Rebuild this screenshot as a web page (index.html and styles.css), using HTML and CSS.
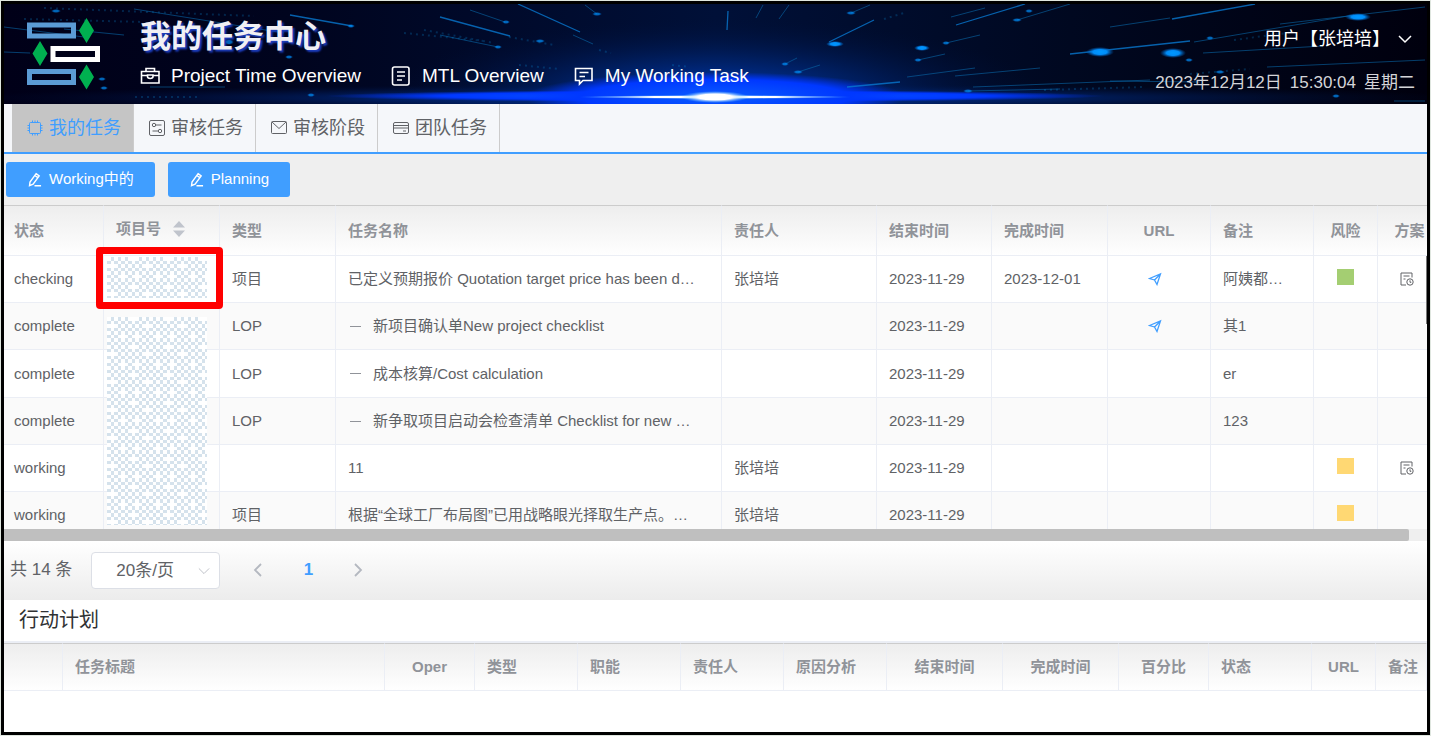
FILE: index.html
```html
<!DOCTYPE html>
<html lang="zh-CN">
<head>
<meta charset="utf-8">
<title>我的任务中心</title>
<link rel="stylesheet" href="styles.css">
</head>
<body>
<svg class="defs" aria-hidden="true">
  <symbol id="i-case" viewBox="0 0 20 20"><path d="M1.5 5.500h17.500v11.500h-17.500zM6 5.500v-3h8.500v3M1.500 9.500h6M13 9.500h6M7.500 9v1.500c0 2.600 5.500 2.600 5.500 0v-1.500z"/></symbol>
  <symbol id="i-doc" viewBox="0 0 20 20"><rect x="1.500" y="1" width="16.500" height="18" rx="2"/><path d="M6 6h8M6 10h8M6 14h5"/></symbol>
  <symbol id="i-chat" viewBox="0 0 20 20"><path d="M1.500 2.500h16.500v12h-9l-3.500 3.500v-3.500h-4zM5.500 6.500h9M5.500 10.500h5.500"/></symbol>
  <symbol id="i-chip" viewBox="0 0 16 16"><rect x="2.500" y="2.500" width="11" height="11" rx="1"/><path d="M5.500 2.500v-2M8 2.500v-2M10.500 2.500v-2M5.500 15.500v-2M8 15.500v-2M10.500 15.500v-2M.500 5.500h2M.500 8h2M.500 10.500h2M13.500 5.500h2M13.500 8h2M13.500 10.500h2"/></symbol>
  <symbol id="i-setup" viewBox="0 0 16 16"><rect x=".500" y=".500" width="15" height="15" rx="1.500"/><circle cx="5" cy="5" r="1.700"/><path d="M7 5h5.500M3.500 11h5.500"/><circle cx="11" cy="11" r="1.700"/></symbol>
  <symbol id="i-mail" viewBox="0 0 16 16"><rect x=".500" y="1.500" width="15" height="12" rx="1"/><path d="M1 2l7 6.500 7-6.500"/></symbol>
  <symbol id="i-card" viewBox="0 0 16 16"><rect x=".500" y="2.500" width="15" height="11" rx="1.500"/><path d="M.500 5.500h15M.500 8h15M10 11h3"/></symbol>
  <symbol id="i-edit" viewBox="0 0 16 16"><path d="M9.700 1.800l3.300 2.300-6.500 9-3.800 1.400.5-3.700zM8.300 3.700l3.300 2.300M8 14.600h7"/></symbol>
  <symbol id="i-send" viewBox="0 0 14 14"><path d="M1.500 6.500l11-4.500-3.500 10.500-2.500-4.500zM6.500 8l6-6"/></symbol>
  <symbol id="i-plan" viewBox="0 0 14 14"><path d="M12 5.500v-4.500h-11v12h5M3.500 4h6M3.500 7h2"/><circle cx="10" cy="10" r="3.200"/><path d="M10 8.300v2h1.300"/></symbol>
  <symbol id="i-down" viewBox="0 0 14 14"><path d="M1 4l6 6 6-6"/></symbol>
</svg>

<header class="banner">
  <svg class="sky" viewBox="0 0 1423 100" preserveAspectRatio="none" aria-hidden="true">
    <defs>
      <linearGradient id="base"><stop offset="0" stop-color="#000018"/><stop offset=".2" stop-color="#00041e"/><stop offset=".5" stop-color="#001038"/><stop offset=".75" stop-color="#000820"/><stop offset="1" stop-color="#00000e"/></linearGradient>
      <radialGradient id="halo"><stop offset="0" stop-color="#0040c8"/><stop offset=".5" stop-color="#002a80" stop-opacity=".55"/><stop offset="1" stop-color="#001038" stop-opacity="0"/></radialGradient>
      <radialGradient id="flare"><stop offset="0" stop-color="#0a5cff"/><stop offset=".7" stop-color="#0038ff"/><stop offset="1" stop-color="#0030ff" stop-opacity="0"/></radialGradient>
      <radialGradient id="core"><stop offset="0" stop-color="#fff"/><stop offset=".5" stop-color="#fff"/><stop offset="1" stop-color="#59b8ff" stop-opacity="0"/></radialGradient>
      <radialGradient id="dot"><stop offset="0" stop-color="#0098ff"/><stop offset=".5" stop-color="#008cf8"/><stop offset="1" stop-color="#0060c0" stop-opacity="0"/></radialGradient>
    </defs>
    <rect width="1423" height="100" fill="url(#base)"/>
    <ellipse cx="711" cy="94" rx="760" ry="14" fill="url(#halo)"/>
    <ellipse cx="711" cy="94" rx="330" ry="80" fill="url(#halo)"/>
    <ellipse cx="711" cy="92" rx="390" ry="6" fill="url(#flare)"/>
    <ellipse cx="711" cy="93" rx="190" ry="25" fill="url(#flare)"/>
    <ellipse cx="711" cy="93" rx="140" ry="2" fill="url(#core)"/>
    <ellipse cx="711" cy="93" rx="34" ry="6" fill="url(#core)"/>
    <g stroke="#0878d0" stroke-width="1.300" opacity=".8">
      <path d="M514 0l62 28M436 13l70 19M825 38l45-22M724 7l-1 19M286 11l62 11M952 21l69-21M843 83l53-5M1168 15l83-15M1066 50l120-13"/>
    </g>
    <g stroke="#0867a8" stroke-width="1" opacity=".6">
      <path d="M60 25l60 6M0 48l26 1M146 83h75M466 6l35 12M436 31l58 12M581 1l12 9M569 31l20 9M759 1l-7 13M785 1l-10 14M847 9l19-8M794 68l22-7M781 60l12-6M914 56l27-6M947 13l34-9M942 39l34-8M1013 16l53-16M1106 23l60-9M1199 49l120-7M1276 20l145-17M1263 63l158-7M1190 38l160-27M969 83l177-7M903 73l68-9M951 72l85-8M964 87l92-2M1106 77l90 1M1390 97h31M130 5l150 24M0 23l80 10"/>
    </g>
    <g stroke="#078ad8" stroke-width="2" stroke-dasharray="2 4" opacity=".25">
      <path d="M40 4l210 8M20 15l120 3M131 93h65M400 29l80 8M420 26l70 13M505 33l45 8M515 61l40 4M595 46l12 3M668 61l18 2M880 15l20-6M1040 86l100-3M1186 70l60-5M1230 36l60-8"/>
    </g>
    <g fill="url(#dot)">
      <ellipse cx="1096" cy="48" rx="14" ry="5"/><ellipse cx="1169" cy="49" rx="13" ry="5"/><ellipse cx="1354" cy="13" rx="13" ry="4"/><ellipse cx="831" cy="40" rx="9" ry="3"/><ellipse cx="918" cy="44" rx="8" ry="3"/>
    </g>
    <g fill="url(#dot)" opacity=".7">
      <ellipse cx="52" cy="7" rx="5" ry="2"/><ellipse cx="285" cy="53" rx="4" ry="2"/><ellipse cx="347" cy="22" rx="4" ry="2"/><ellipse cx="225" cy="38" rx="5" ry="3"/><ellipse cx="98" cy="75" rx="4" ry="2"/><ellipse cx="100" cy="84" rx="4" ry="2"/><ellipse cx="307" cy="91" rx="4" ry="2"/><ellipse cx="494" cy="43" rx="4" ry="2"/><ellipse cx="502" cy="18" rx="4" ry="2"/><ellipse cx="593" cy="10" rx="5" ry="2"/><ellipse cx="536" cy="37" rx="5" ry="2"/><ellipse cx="847" cy="9" rx="5" ry="2"/><ellipse cx="794" cy="68" rx="5" ry="2"/><ellipse cx="781" cy="60" rx="4" ry="2"/><ellipse cx="1013" cy="16" rx="5" ry="2"/><ellipse cx="1025" cy="7" rx="4" ry="2"/><ellipse cx="914" cy="56" rx="4" ry="2"/><ellipse cx="942" cy="39" rx="4" ry="2"/><ellipse cx="964" cy="87" rx="5" ry="2"/><ellipse cx="1185" cy="56" rx="4" ry="2"/><ellipse cx="1216" cy="68" rx="5" ry="2"/><ellipse cx="1332" cy="92" rx="4" ry="2"/><ellipse cx="1206" cy="34" rx="4" ry="2"/>
    </g>
  </svg>
  <svg class="logo" viewBox="0 0 74 72" aria-label="logo" role="img">
    <g fill="none" stroke-width="5"><path d="M2.500 7h44v11h-44zM2.500 53.500h44v11h-44z" stroke="#5b9bd5"/><path d="M26 30.500h44.500v11h-44.500z" stroke="#fff"/></g>
    <path d="M59.500 0l7.500 12.500-7.500 12.500-7.500-12.500zM13 23l7.500 12.500-7.500 12.500-7.500-12.500zM59.500 46.500l7.500 12.500-7.500 12.500-7.500-12.500z" fill="#00b050"/>
  </svg>
  <div class="heading">
    <h1>我的任务中心</h1>
    <nav class="links">
      <a href="#"><svg><use href="#i-case"/></svg>Project Time Overview</a>
      <a href="#"><svg><use href="#i-doc"/></svg>MTL Overview</a>
      <a href="#"><svg><use href="#i-chat"/></svg>My Working Task</a>
    </nav>
  </div>
  <div class="account">
    <button class="user" type="button">用户【张培培】<svg><use href="#i-down"/></svg></button>
    <div class="clock"><span>2023年12月12日</span><span>15:30:04</span><span>星期二</span></div>
  </div>
</header>

<nav class="tabs">
  <a class="tab active" href="#"><svg><use href="#i-chip"/></svg>我的任务</a>
  <a class="tab" href="#"><svg><use href="#i-setup"/></svg>审核任务</a>
  <a class="tab" href="#"><svg><use href="#i-mail"/></svg>审核阶段</a>
  <a class="tab" href="#"><svg><use href="#i-card"/></svg>团队任务</a>
</nav>

<div class="toolbar">
  <button type="button"><svg><use href="#i-edit"/></svg>Working中的</button>
  <button type="button"><svg><use href="#i-edit"/></svg>Planning</button>
</div>

<section class="tasks">
  <div class="viewport">
    <table>
      <colgroup><col class="w100"><col class="w116"><col class="w116"><col><col class="w155"><col class="w115"><col class="w116"><col class="w103"><col class="w103"><col class="w64"><col class="w64"></colgroup>
      <thead><tr><th>状态</th><th><button class="sort" type="button">项目号<svg viewBox="0 0 12 16"><path d="M6 0l6 6.500h-12zM6 16l6-6.500h-12z"/></svg></button></th><th>类型</th><th>任务名称</th><th>责任人</th><th>结束时间</th><th>完成时间</th><th class="mid">URL</th><th>备注</th><th class="mid">风险</th><th class="mid">方案</th></tr></thead>
      <tbody>
        <tr><td>checking</td><td></td><td>项目</td><td>已定义预期报价 Quotation target price has been d…</td><td>张培培</td><td>2023-11-29</td><td>2023-12-01</td><td class="act"><svg class="send"><use href="#i-send"/></svg></td><td>阿姨都…</td><td class="mid"><i class="risk low"></i></td><td class="act"><svg><use href="#i-plan"/></svg></td></tr>
        <tr><td>complete</td><td></td><td>LOP</td><td><i class="dash"></i>新项目确认单New project checklist</td><td></td><td>2023-11-29</td><td></td><td class="act"><svg class="send"><use href="#i-send"/></svg></td><td>其1</td><td></td><td></td></tr>
        <tr><td>complete</td><td></td><td>LOP</td><td><i class="dash"></i>成本核算/Cost calculation</td><td></td><td>2023-11-29</td><td></td><td></td><td>er</td><td></td><td></td></tr>
        <tr><td>complete</td><td></td><td>LOP</td><td><i class="dash"></i>新争取项目启动会检查清单 Checklist for new …</td><td></td><td>2023-11-29</td><td></td><td></td><td>123</td><td></td><td></td></tr>
        <tr><td>working</td><td></td><td></td><td>11</td><td>张培培</td><td>2023-11-29</td><td></td><td></td><td></td><td class="mid"><i class="risk warn"></i></td><td class="act"><svg><use href="#i-plan"/></svg></td></tr>
        <tr><td>working</td><td></td><td>项目</td><td>根据“全球工厂布局图”已用战略眼光择取生产点。…</td><td>张培培</td><td>2023-11-29</td><td></td><td></td><td></td><td class="mid"><i class="risk warn"></i></td><td></td></tr>
      </tbody>
    </table>
    <i class="vthumb"></i>
  </div>
  <div class="hscroll"><i></i></div>
  <svg class="mosaic first" aria-hidden="true">
    <defs>
      <pattern id="cell" width="7" height="7" patternUnits="userSpaceOnUse"><path d="M4 0h3v4h-3zM0 4h4v3h-4z" fill="#d5e2ec"/></pattern>
      <pattern id="gaps" width="35" height="28" patternUnits="userSpaceOnUse"><path d="M4 7h3v4h-3zM14 18h4v3h-4zM25 0h3v4h-3zM28 18h4v3h-4z" fill="#fff"/></pattern>
    </defs>
    <rect width="100%" height="100%" fill="url(#cell)"/><rect width="100%" height="100%" fill="url(#gaps)"/>
  </svg>
  <svg class="mosaic rest" aria-hidden="true"><rect width="100%" height="100%" fill="url(#cell)"/><rect width="100%" height="100%" fill="url(#gaps)"/></svg>
  <i class="marker"></i>
</section>

<div class="pager">
  <span>共 14 条</span>
  <label class="size"><select aria-label="每页条数"><option>20条/页</option></select><svg><use href="#i-down"/></svg></label>
  <button type="button" aria-label="上一页"><svg viewBox="0 0 14 14"><path d="M10 1l-6 6 6 6"/></svg></button>
  <button type="button" class="current">1</button>
  <button type="button" aria-label="下一页"><svg viewBox="0 0 14 14"><path d="M4 1l6 6-6 6"/></svg></button>
</div>

<h2>行动计划</h2>
<section class="plans">
  <table>
    <colgroup><col class="w59"><col><col class="w90"><col class="w103"><col class="w103"><col class="w103"><col class="w103"><col class="w116"><col class="w116"><col class="w90"><col class="w103"><col class="w64"><col class="w51"></colgroup>
    <thead><tr><th></th><th>任务标题</th><th class="mid">Oper</th><th>类型</th><th>职能</th><th>责任人</th><th>原因分析</th><th class="mid">结束时间</th><th class="mid">完成时间</th><th class="mid">百分比</th><th>状态</th><th class="mid">URL</th><th>备注</th></tr></thead>
  </table>
</section>
</body>
</html>
```
FILE: styles.css
```css
* { box-sizing: border-box; }
html { background: #dfe6df; }
body {
  margin: 1px;
  border: 3px solid #000;
  min-width: 1100px;
  min-height: calc(100vh - 2px);
  background: #fff;
  color: #606266;
  font: 15px/20px "Liberation Sans", "Noto Sans CJK SC", sans-serif;
}
svg { fill: none; stroke: currentColor; flex: none; }
button { border: 0; padding: 0; background: none; font: inherit; color: inherit; }
a { color: inherit; text-decoration: none; }
.defs { display: none; }

.banner {
  position: relative;
  display: flex;
  height: 100px;
  padding: 11px 12px 0 23px;
  color: #fff;
  background: #000820;
}
.sky { position: absolute; inset: 0; width: 100%; height: 100%; stroke: none; }
.banner > :not(.sky) { position: relative; }
.logo { width: 74px; height: 72px; margin: 3px 39px 0 0; stroke: none; }
h1 {
  margin: 0 0 5px;
  font-size: 31px;
  line-height: 44px;
  font-weight: 700;
  color: #f0f0f4;
  text-shadow: 2px 2px 2px #1c3ec0;
}
.links { display: flex; gap: 30px; }
.links a { display: flex; align-items: center; gap: 11px; font-size: 19px; line-height: 24px; }
.links svg { width: 20px; height: 20px; stroke-width: 1.6; }
.account { margin-left: auto; display: flex; flex-direction: column; align-items: flex-end; gap: 20px; padding-top: 12px; }
.user { display: flex; align-items: center; gap: 8px; font-size: 18px; line-height: 24px; }
.user svg { width: 14px; height: 14px; margin-right: 3px; stroke-width: 1.5; }
.clock { display: flex; gap: 8px; font-size: 17px; line-height: 24px; color: #d4d4d8; }

.tabs { display: flex; padding-left: 8px; background: #f5f7fa; border-bottom: 2px solid #409eff; }
.tab {
  display: flex;
  gap: 6px;
  padding: 0 12px 0 15px;
  align-items: center;
  font-size: 18px;
  line-height: 48px;
  border-right: 1px solid #ccc;
}
.tab svg { width: 16px; height: 16px; }
.active { background: #c5c5c5; color: #409eff; }

.toolbar { display: flex; gap: 13px; padding: 8px 2px; background: #efefef; }
.toolbar button {
  display: flex;
  align-items: center;
  gap: 7px;
  height: 35px;
  padding: 0 21px 1px;
  border-radius: 3px;
  background: #409eff;
  color: #fff;
}
.toolbar svg { width: 15px; height: 15px; stroke-width: 1.5; }

table { width: 100%; table-layout: fixed; border-collapse: separate; border-spacing: 0; }
th, td { padding: 0 12px; text-align: left; white-space: nowrap; border-right: 1px solid #ebeef5; border-bottom: 1px solid #ebeef5; }
th { height: 48px; color: #909399; border-top: 1px solid #ccc; }
td { height: 47px; }
tr:nth-child(3) td { height: 48px; }
thead tr { background: linear-gradient(#ededed, #fff); }
tbody tr:nth-child(even) { background: #fafafa; }
.mid { text-align: center; }
.act { padding: 0 20px 0 12px; text-align: center; }
.w51 { width: 51px; }
.w59 { width: 59px; }
.w64 { width: 64px; }
.w90 { width: 90px; }
.w100 { width: 100px; }
.w103 { width: 103px; }
.w115 { width: 115px; }
.w116 { width: 116px; }
.w155 { width: 155px; }

.tasks { position: relative; }
.viewport { position: relative; max-height: 324px; overflow: hidden; }
.viewport table { width: calc(100% + 15px); }
.viewport th { height: 51px; }
.viewport th:first-child, .viewport td:first-child { padding-left: 10px; }
.sort { display: flex; align-items: center; gap: 12px; padding-bottom: 3px; }
.sort svg { width: 12px; height: 16px; fill: #c0c4cc; stroke: none; }
.act svg { display: inline-block; width: 14px; height: 14px; margin-bottom: 3px; vertical-align: middle; }
.act .send { color: #409eff; stroke-width: 1.3; }
td.act:last-child { padding: 0 17px 0 12px; }
.risk { display: inline-block; width: 17px; height: 16px; margin-bottom: 5px; vertical-align: middle; }
.low { background: #a4ce72; }
.warn { background: #ffd873; }
.dash { display: inline-block; width: 11px; height: 1px; margin: 0 12px 2px 2px; background: #909399; vertical-align: middle; }
.vthumb { position: absolute; right: 0; top: 51px; width: 1px; height: 68px; background: #777; }
.hscroll { height: 12px; background: #efefef; }
.hscroll i { display: block; width: calc(100% - 18px); height: 12px; background: #bfbfbf; border-radius: 0 2px 2px 0; }
.mosaic { position: absolute; left: 103px; width: 100px; background: #fff; stroke: none; shape-rendering: crispEdges; }
.first { top: 52px; height: 41px; }
.rest { top: 112px; height: 208px; }
.marker { position: absolute; left: 92px; top: 42px; width: 127px; height: 62px; border: 7px solid #f00; border-radius: 4px; }

.pager {
  display: flex;
  align-items: center;
  height: 59px;
  padding: 0 6px 2px;
  font-size: 17px;
  background: linear-gradient(#fff, #ececec);
}
.size { position: relative; width: 129px; margin: 2px 31px 0 19px; }
.size select {
  display: block;
  width: 100%;
  height: 37px;
  padding: 0 24px;
  font: inherit;
  color: inherit;
  appearance: none;
  border: 1px solid #dcdfe6;
  border-radius: 4px;
  background: #fff;
}
.size svg { position: absolute; right: 10px; top: 13px; width: 12px; height: 12px; color: #b4b8c0; }
.pager button { display: flex; justify-content: center; width: 14px; margin-right: 36px; color: #b4b8c0; }
.pager button svg { width: 14px; height: 14px; stroke-width: 1.8; }
.pager .current { color: #409eff; font-weight: 700; }

h2 { margin: 0; padding: 1px 15px; font-size: 20px; line-height: 39px; font-weight: 400; color: #303133; border-bottom: 2px solid #ebeef5; }
.plans { overflow: hidden; }
```
